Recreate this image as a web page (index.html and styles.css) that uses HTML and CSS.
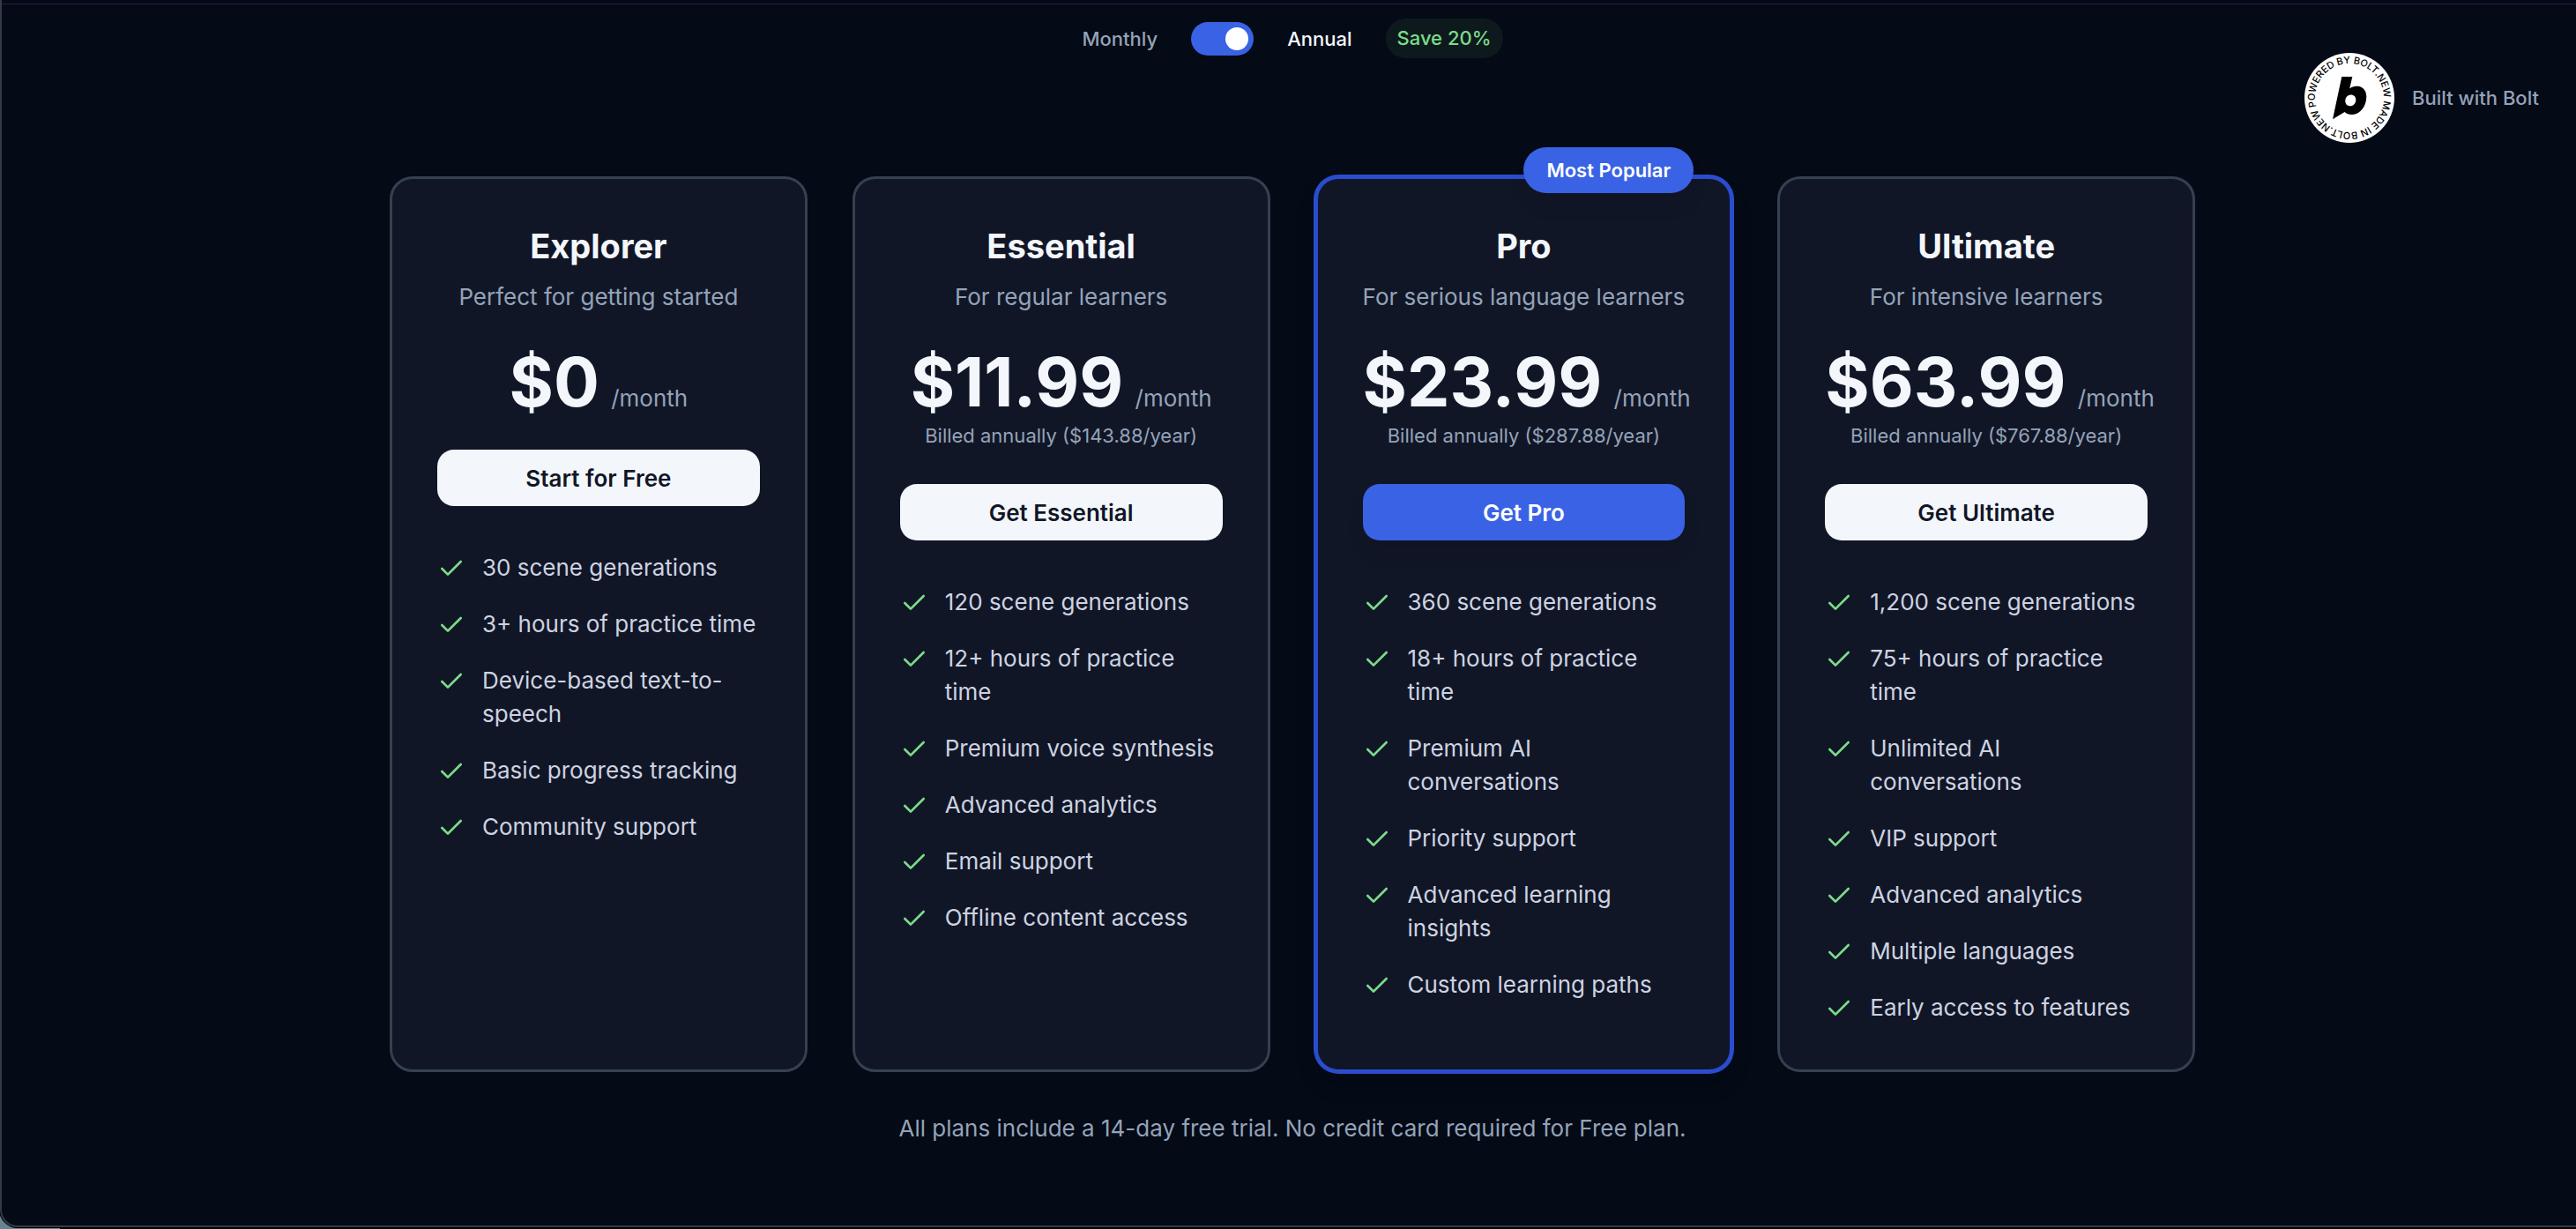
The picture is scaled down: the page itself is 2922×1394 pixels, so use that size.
FILE: index.html
```html
<!DOCTYPE html>
<html lang="en">

<head>
    <meta charset="UTF-8">
    <title>Pricing</title>
    <link rel="stylesheet" href="styles.css">
</head>

<body>
    <!-- Check mark shared by all the feature lists -->
    <svg class="sprite" aria-hidden="true">
        <symbol id="check" viewBox="0 0 24 24">
            <path d="M20 6 9 17l-5-5" fill="none" stroke="currentColor" stroke-width="2" stroke-linecap="round" stroke-linejoin="round" />
        </symbol>
    </svg>

    <div class="window">
        <header class="topbar"></header>

        <a class="bolt" href="#bolt">
            <svg class="bolt-logo" viewBox="0 0 102 102" aria-hidden="true">
                <circle cx="51" cy="51" r="51" fill="#fff" />
                <path id="ring" fill="none" d="M13.3 61.1A39 39 0 1 1 88.7 40.9A39 39 0 1 1 13.3 61.1" />
                <text class="bolt-ring"><textPath href="#ring">POWERED BY BOLT.NEW MADE IN BOLT.NEW</textPath></text>
                <path fill="#000" fill-rule="evenodd" d="M42.3 27H54.3L51.2 40.4C53.8 38.4 56.8 37.6 60 37.8C66.4 38.2 70.3 43 70.3 49.6C70.3 60.6 63.4 70 54 70C50.4 70 47.3 69 45.6 67L32 75.3ZM52.6 47.6C49 47.6 46.3 50.8 46.3 54.6C46.3 58 48.4 60.3 51.6 60.3C55.4 60.3 58.3 57.2 58.3 53.2C58.3 49.8 56 47.6 52.6 47.6Z" />
            </svg>
            <span>Built with Bolt</span>
        </a>

        <main class="pricing">
            <div class="billing">
                <label class="billing-label" for="annual">Monthly</label>
                <input class="switch" type="checkbox" id="annual" checked>
                <label class="billing-label active" for="annual">Annual</label>
                <span class="save">Save 20%</span>
            </div>

            <div class="plans">
                <section class="plan">
                    <h2 class="plan-name">Explorer</h2>
                    <p class="plan-text">Perfect for getting started</p>
                    <p class="price"><strong class="amount">$0</strong> <span class="period">/month</span></p>
                    <button class="plan-button" type="button">Start for Free</button>
                    <ul class="features">
                        <li><svg class="check"><use href="#check" /></svg><span>30 scene generations</span></li>
                        <li><svg class="check"><use href="#check" /></svg><span>3+ hours of practice time</span></li>
                        <li><svg class="check"><use href="#check" /></svg><span>Device-based text-to-speech</span></li>
                        <li><svg class="check"><use href="#check" /></svg><span>Basic progress tracking</span></li>
                        <li><svg class="check"><use href="#check" /></svg><span>Community support</span></li>
                    </ul>
                </section>

                <section class="plan">
                    <h2 class="plan-name">Essential</h2>
                    <p class="plan-text">For regular learners</p>
                    <p class="price"><strong class="amount">$11.99</strong> <span class="period">/month</span></p>
                    <p class="billed">Billed annually ($143.88/year)</p>
                    <button class="plan-button" type="button">Get Essential</button>
                    <ul class="features">
                        <li><svg class="check"><use href="#check" /></svg><span>120 scene generations</span></li>
                        <li><svg class="check"><use href="#check" /></svg><span>12+ hours of practice time</span></li>
                        <li><svg class="check"><use href="#check" /></svg><span>Premium voice synthesis</span></li>
                        <li><svg class="check"><use href="#check" /></svg><span>Advanced analytics</span></li>
                        <li><svg class="check"><use href="#check" /></svg><span>Email support</span></li>
                        <li><svg class="check"><use href="#check" /></svg><span>Offline content access</span></li>
                    </ul>
                </section>

                <section class="plan popular">
                    <span class="ribbon">Most Popular</span>
                    <h2 class="plan-name">Pro</h2>
                    <p class="plan-text">For serious language learners</p>
                    <p class="price"><strong class="amount">$23.99</strong> <span class="period">/month</span></p>
                    <p class="billed">Billed annually ($287.88/year)</p>
                    <button class="plan-button" type="button">Get Pro</button>
                    <ul class="features">
                        <li><svg class="check"><use href="#check" /></svg><span>360 scene generations</span></li>
                        <li><svg class="check"><use href="#check" /></svg><span>18+ hours of practice time</span></li>
                        <li><svg class="check"><use href="#check" /></svg><span>Premium AI conversations</span></li>
                        <li><svg class="check"><use href="#check" /></svg><span>Priority support</span></li>
                        <li><svg class="check"><use href="#check" /></svg><span>Advanced learning insights</span></li>
                        <li><svg class="check"><use href="#check" /></svg><span>Custom learning paths</span></li>
                    </ul>
                </section>

                <section class="plan">
                    <h2 class="plan-name">Ultimate</h2>
                    <p class="plan-text">For intensive learners</p>
                    <p class="price"><strong class="amount">$63.99</strong> <span class="period">/month</span></p>
                    <p class="billed">Billed annually ($767.88/year)</p>
                    <button class="plan-button" type="button">Get Ultimate</button>
                    <ul class="features">
                        <li><svg class="check"><use href="#check" /></svg><span>1,200 scene generations</span></li>
                        <li><svg class="check"><use href="#check" /></svg><span>75+ hours of practice time</span></li>
                        <li><svg class="check"><use href="#check" /></svg><span>Unlimited AI conversations</span></li>
                        <li><svg class="check"><use href="#check" /></svg><span>VIP support</span></li>
                        <li><svg class="check"><use href="#check" /></svg><span>Advanced analytics</span></li>
                        <li><svg class="check"><use href="#check" /></svg><span>Multiple languages</span></li>
                        <li><svg class="check"><use href="#check" /></svg><span>Early access to features</span></li>
                    </ul>
                </section>
            </div>

            <p class="note">All plans include a 14-day free trial. No credit card required for Free plan.</p>
        </main>
    </div>
</body>

</html>
```
FILE: styles.css
```css
* {
    box-sizing: border-box;
}

body {
    font-family: Inter, sans-serif;
    font-size: 26px;
    line-height: 38px;
    margin: 0;
    padding-bottom: 2px;
    color: #94a3b8;
    background: #000 linear-gradient(#66858f, #66858f) no-repeat left bottom / 68px 20px;
}

h2,
p,
ul {
    margin: 0;
    padding: 0;
}

.sprite {
    display: none;
}

.window {
    position: relative;
    min-height: calc(100vh - 2px);
    border-left: 2px solid #363a48;
    border-bottom: 2px solid #363a48;
    border-bottom-left-radius: 20px;
    box-shadow: 0 0 0 1px #000;
    background: #040a16;
}

.topbar {
    height: 5px;
    background: #050816;
    border-bottom: 1px solid #1d273a;
}

.bolt {
    position: absolute;
    top: 60px;
    right: 42px;
    display: flex;
    align-items: center;
    gap: 20px;
    font-size: 22px;
    font-weight: 500;
    color: #94a3b8;
    text-decoration: none;
}

.bolt-logo {
    width: 102px;
    height: 102px;
}

.bolt-ring {
    font-size: 11px;
    font-weight: 500;
    fill: #000;
}

.pricing {
    padding: 16px 24px 0 32px;
}

.billing {
    display: flex;
    justify-content: center;
    align-items: center;
    gap: 38px;
    margin-bottom: 134px;
}

.billing-label {
    font-size: 22px;
    font-weight: 500;
}

.billing-label.active {
    color: #f3f6fb;
}

.switch {
    appearance: none;
    width: 71px;
    height: 38px;
    margin: 0;
    padding: 6px;
    border-radius: 19px;
    background: #3963e4;
    cursor: pointer;
}

.switch::before {
    content: "";
    display: block;
    width: 26px;
    height: 26px;
    border-radius: 50%;
    background: #fff;
}

.switch:checked::before {
    margin-left: auto;
}

.save {
    padding: 6px 13px;
    border-radius: 23px;
    font-size: 22px;
    font-weight: 500;
    line-height: 33px;
    color: #7bdc89;
    background: #0e191d;
}

.plans {
    display: grid;
    grid-template-columns: repeat(4, minmax(0, 1fr));
    gap: 51px;
    max-width: 2048px;
    margin: 0 auto;
}

.plan {
    position: relative;
    padding: 51px;
    border: 3px solid #354050;
    border-radius: 26px;
    background: #111627;
    text-align: center;
}

.popular {
    border-color: #2a4dd0;
    box-shadow: 0 0 0 2px #2a4dd0, 0 16px 24px rgba(0, 0, 0, 0.1);
}

.ribbon {
    position: absolute;
    top: -36px;
    right: 41px;
    padding: 7px 26px;
    border-radius: 26px;
    font-size: 22px;
    font-weight: 600;
    color: #fff;
    background: #3963e4;
    box-shadow: 0 16px 24px -5px rgba(0, 0, 0, 0.1);
}

.plan-name {
    margin-bottom: 13px;
    font-size: 38px;
    font-weight: 700;
    line-height: 51px;
    color: #f3f6fb;
}

.plan-text {
    margin-bottom: 38px;
}

.price {
    white-space: nowrap;
}

.amount {
    font-size: 77px;
    font-weight: 700;
    line-height: 78px;
    color: #f3f6fb;
}

.period {
    margin-left: 6px;
}

.billed {
    margin-top: 6px;
    font-size: 22px;
    line-height: 33px;
}

.plan-button {
    width: 100%;
    height: 64px;
    margin: 38px 0 51px;
    border: none;
    border-radius: 19px;
    font-family: inherit;
    font-size: 26px;
    font-weight: 600;
    color: #111627;
    background: #f3f6fb;
    cursor: pointer;
}

.popular .plan-button {
    color: #fff;
    background: #3963e4;
    box-shadow: 0 16px 24px -5px rgba(0, 0, 0, 0.1);
}

.features {
    display: grid;
    gap: 26px;
    list-style: none;
    text-align: left;
    color: #cdd3e0;
}

.features li {
    display: flex;
    align-items: flex-start;
    gap: 19px;
}

.check {
    flex: none;
    width: 32px;
    height: 32px;
    margin-top: 4px;
    color: #7bdc89;
}

.note {
    margin-top: 45px;
    text-align: center;
}
```
